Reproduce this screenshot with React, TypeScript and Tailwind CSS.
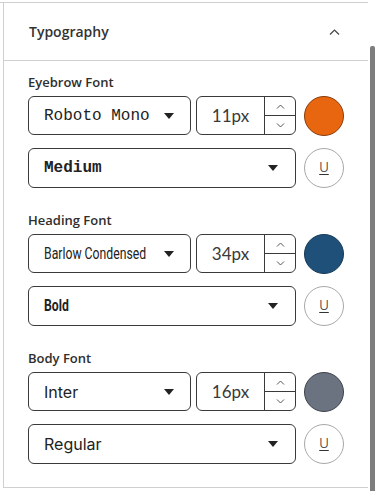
import React from 'react';

type FontRow = {
  label: string;
  family: string;
  size: string;
  weight: string;
  color: string;
  ring: string;
  variant: 'mono' | 'condensed' | 'inter';
};

const rows: FontRow[] = [
  { label: 'Eyebrow Font', family: 'Roboto Mono', size: '11px', weight: 'Medium', color: 'bg-[#e8660f]', ring: 'border-[#8a3c0c]', variant: 'mono' },
  { label: 'Heading Font', family: 'Barlow Condensed', size: '34px', weight: 'Bold', color: 'bg-[#1e5079]', ring: 'border-[#163a58]', variant: 'condensed' },
  { label: 'Body Font', family: 'Inter', size: '16px', weight: 'Regular', color: 'bg-[#6b7280]', ring: 'border-[#3f444c]', variant: 'inter' },
];

const Caret = () => (
  <svg width="10" height="6" viewBox="0 0 10 6" className="shrink-0">
    <path d="M0 0 H10 L5 6 Z" fill="#222" />
  </svg>
);

const Chevron = ({ up }: { up?: boolean }) => (
  <svg width="9" height="5" viewBox="0 0 9 5">
    <polyline
      points={up ? '1,4.5 4.5,1 8,4.5' : '1,0.5 4.5,4 8,0.5'}
      fill="none"
      stroke="#555"
      strokeWidth="1"
    />
  </svg>
);

// condensed face isn't installed, so squeeze Roboto inside a box of the real width
const Condensed: React.FC<{ text: string; width: string; bold?: boolean }> = ({ text, width, bold }) => (
  <span className={`block whitespace-nowrap ${width}`}>
    <span
      className={`inline-block origin-left scale-x-[0.72] font-['Roboto',sans-serif] text-[17px] text-[#222] ${bold ? 'font-bold' : ''}`}
    >
      {text}
    </span>
  </span>
);

const FamilyText: React.FC<{ row: FontRow }> = ({ row }) => {
  if (row.variant === 'mono')
    return <span className="font-['Liberation_Mono','DejaVu_Sans_Mono',monospace] text-[16px] text-[#222]">{row.family}</span>;
  if (row.variant === 'condensed') return <Condensed text={row.family} width="w-[98px]" />;
  return <span className="font-['Inter',sans-serif] text-[16px] text-[#222]">{row.family}</span>;
};

const WeightText: React.FC<{ row: FontRow }> = ({ row }) => {
  if (row.variant === 'mono')
    return <span className="font-['Liberation_Mono','DejaVu_Sans_Mono',monospace] text-[16px] font-bold text-[#222]">{row.weight}</span>;
  if (row.variant === 'condensed') return <Condensed text={row.weight} width="w-[26px]" bold />;
  return <span className="font-['Inter',sans-serif] text-[16px] text-[#222]">{row.weight}</span>;
};

const FontSection: React.FC<{ row: FontRow }> = ({ row }) => (
  <div className="flex flex-col">
    <div className="h-4 text-[13px] leading-4 font-semibold text-[#2e2e2e] font-['Open_Sans',sans-serif]">{row.label}</div>
    <div className="mt-[6px] flex h-10 items-start">
      <div className="flex h-[39px] w-[163px] items-center justify-between overflow-hidden rounded-[6px] border border-[#3a3a3a] pl-[15px] pr-4">
        <FamilyText row={row} />
        <Caret />
      </div>
      <div className="ml-[5px] flex h-[39px] w-[100px] overflow-hidden rounded-[6px] border border-[#3a3a3a]">
        <div className="flex flex-1 items-center justify-center font-['Lato',sans-serif] text-[17px] text-[#3a3a3a]">
          {row.size}
        </div>
        <div className="flex w-[31px] flex-col border-l border-[#3a3a3a]">
          <div className="flex flex-1 items-center justify-center border-b border-[#3a3a3a]">
            <Chevron up />
          </div>
          <div className="flex flex-1 items-center justify-center">
            <Chevron />
          </div>
        </div>
      </div>
      <div className={`ml-2 h-10 w-10 rounded-full border ${row.color} ${row.ring}`} />
    </div>
    <div className="mt-3 flex h-10 items-center">
      <div className="flex h-10 w-[268px] items-center justify-between overflow-hidden rounded-[6px] border border-[#3a3a3a] pl-[15px] pr-[17px]">
        <WeightText row={row} />
        <Caret />
      </div>
      <button className="ml-2 flex h-10 w-10 items-center justify-center rounded-full border border-[#a8a8a8] bg-white">
        <span className="font-['Inter',sans-serif] text-[13px] font-light text-[#333] underline underline-offset-2">U</span>
      </button>
    </div>
  </div>
);

export default function App() {
  return (
    <div className="relative h-[491px] w-[375px] overflow-hidden bg-white pt-[2px]">
      <div className="h-px w-[368px] bg-[#cfcfcf]" />
      <div className="ml-[3px] w-[365px] border-l border-b border-[#cfcfcf]">
        <div className="flex h-[58px] items-center justify-between border-b border-[#cfcfcf] pl-[25px] pr-[28px]">
          <span className="font-['Open_Sans',sans-serif] text-[14px] font-semibold text-[#333]">Typography</span>
          <svg width="11" height="6" viewBox="0 0 11 6">
            <polyline points="1,5.5 5.5,1 10,5.5" fill="none" stroke="#444" strokeWidth="1.2" />
          </svg>
        </div>
        <div className="flex flex-col gap-6 pb-[23px] pl-6 pt-[13px]">
          {rows.map((r) => (
            <FontSection key={r.label} row={r} />
          ))}
        </div>
      </div>
      <div className="absolute bottom-0 right-0 top-[46px] w-[5px] rounded-t-[2px] bg-[#7d7d7d]" />
    </div>
  );
}
